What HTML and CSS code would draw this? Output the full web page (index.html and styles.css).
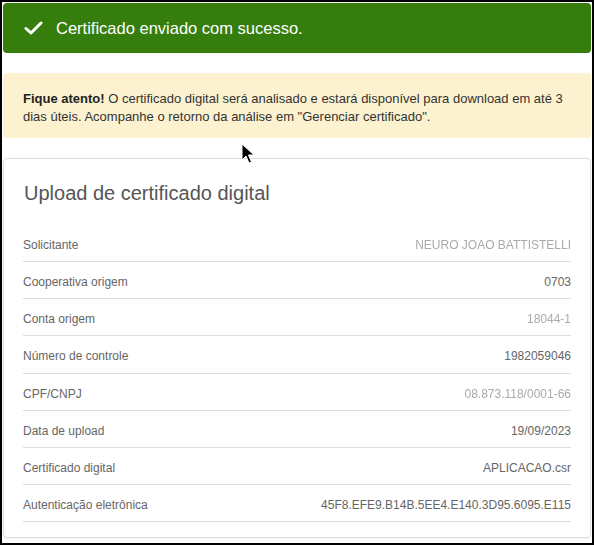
FILE: index.html
```html
<!DOCTYPE html>
<html lang="pt-BR">
<head>
    <meta charset="UTF-8">
    <meta name="viewport" content="width=device-width, initial-scale=1.0">
    <title>Upload de certificado digital</title>
    <link rel="stylesheet" href="styles.css">
</head>
<body>

    <div class="frame">
        <div class="alert-success">
            <svg class="check" width="19" height="14" viewBox="0 0 19 14">
                <path d="M2 7.5 L7 12 L17 2" fill="none" stroke="#fff" stroke-width="3" stroke-linecap="round" stroke-linejoin="round"/>
            </svg>
            <span>Certificado enviado com sucesso.</span>
        </div>

        <div class="alert-warning">
            <p><b>Fique atento!</b> O certificado digital será analisado e estará disponível para download em até 3 dias úteis. Acompanhe o retorno da análise em "Gerenciar certificado".</p>
        </div>

        <div class="card">
            <h2>Upload de certificado digital</h2>

            <div class="row">
                <span>Solicitante</span>
                <span class="masked">NEURO JOAO BATTISTELLI</span>
            </div>
            <div class="row">
                <span>Cooperativa origem</span>
                <span>0703</span>
            </div>
            <div class="row">
                <span>Conta origem</span>
                <span class="masked">18044-1</span>
            </div>
            <div class="row">
                <span>Número de controle</span>
                <span>1982059046</span>
            </div>
            <div class="row">
                <span>CPF/CNPJ</span>
                <span class="masked">08.873.118/0001-66</span>
            </div>
            <div class="row">
                <span>Data de upload</span>
                <span>19/09/2023</span>
            </div>
            <div class="row">
                <span>Certificado digital</span>
                <span>APLICACAO.csr</span>
            </div>
            <div class="row">
                <span>Autenticação eletrônica</span>
                <span>45F8.EFE9.B14B.5EE4.E140.3D95.6095.E115</span>
            </div>
        </div>

        <!-- ponteiro do mouse que aparece na captura -->
        <svg class="cursor" width="14" height="22" viewBox="0 0 14 22">
            <path d="M1 1 L1 17 L5 13 L8 20 L10.5 19 L7.5 12 L13 12 Z" fill="#000" stroke="#fff" stroke-width="1"/>
        </svg>
    </div>

</body>
</html>
```

FILE: styles.css
```css
body {
    margin: 0;
    font-family: "Liberation Sans", Arial, sans-serif;
    background: #fff;
}

.frame {
    position: relative;
    box-sizing: border-box;
    width: 594px;
    height: 545px;
    border: 2px solid #000;
    padding: 1px;
    overflow: hidden;
}

.alert-success {
    display: flex;
    align-items: center;
    height: 50px;
    padding-left: 21px;
    background: #357e0d;
    border-radius: 4px;
    color: #fff;
    font-size: 16.5px;
}

.check {
    margin-right: 13px;
    margin-top: -1px;
}

.alert-warning {
    margin-top: 20px;
    padding: 17px 20px 13px;
    background: #fcf2cf;
    border-radius: 4px;
    color: #333;
    font-size: 13px;
    line-height: 17.5px;
}

.alert-warning p {
    margin: 0;
}

.alert-warning b {
    color: #222;
}

.card {
    margin-top: 20px;
    padding: 0 19px 15px;
    border: 1px solid #ddd;
    border-radius: 4px;
    box-shadow: 0 1px 2px rgba(0, 0, 0, 0.05);
}

.card h2 {
    margin: 0;
    padding: 22px 1px 20px;
    font-size: 20px;
    font-weight: normal;
    line-height: 24px;
    color: #555;
}

.row {
    display: flex;
    justify-content: space-between;
    padding: 12px 0 7px;
    border-bottom: 1px solid #ddd;
    font-size: 12px;
    line-height: 17.14px;
    color: #666;
}

.masked {
    color: #aaa;
    filter: blur(0.7px);
}

.cursor {
    position: absolute;
    left: 239px;
    top: 141px;
}
```
